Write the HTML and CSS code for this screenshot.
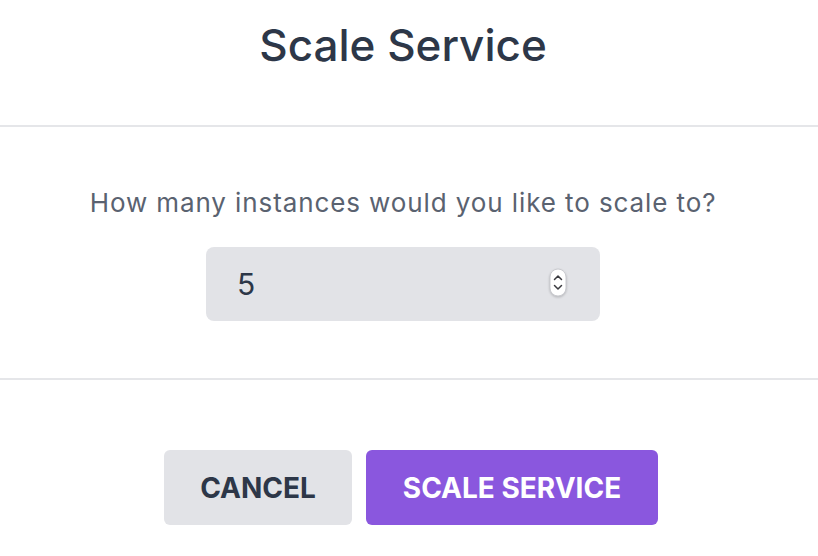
FILE: index.html
```html
<!DOCTYPE html>
<html lang="en">
<head>
<meta charset="utf-8">
<title>Scale Service</title>
<link rel="stylesheet" href="styles.css">
</head>
<body>
<div class="modal">
  <header class="modal-header">
    <h1 class="title">Scale Service</h1>
  </header>
  <section class="modal-body">
    <p class="question">How many instances would you like to scale to?</p>
    <div class="number-input">
      <span class="value">5</span>
      <span class="spinner">
        <svg width="18" height="30" viewBox="0 0 18 30">
          <rect x="1" y="1" width="16" height="27" rx="8" fill="#ffffff" stroke="#c9cacf" stroke-width="1"/>
          <path d="M5.5 11.5 L9 8 L12.5 11.5" fill="none" stroke="#3a3a3f" stroke-width="1.5" stroke-linecap="round" stroke-linejoin="round"/>
          <path d="M5.5 17.5 L9 21 L12.5 17.5" fill="none" stroke="#3a3a3f" stroke-width="1.5" stroke-linecap="round" stroke-linejoin="round"/>
        </svg>
      </span>
    </div>
  </section>
  <footer class="modal-footer">
    <button class="btn btn-cancel">CANCEL</button>
    <button class="btn btn-primary">SCALE SERVICE</button>
  </footer>
</div>
</body>
</html>
```

FILE: styles.css
```css
* { box-sizing: border-box; }
html, body {
  margin: 0;
  padding: 0;
  background: #ffffff;
  font-family: Inter, "Noto Sans", "Liberation Sans", sans-serif;
}
.modal {
  width: 818px;
  height: 556px;
  display: flex;
  flex-direction: column;
}
.modal-header {
  height: 127px;
  border-bottom: 2px solid #e5e6e9;
  padding: 18px 12px 0 0;
  text-align: center;
}
.title {
  margin: 0;
  font-size: 44px;
  line-height: 54px;
  font-weight: 500;
  color: #2d3748;
  letter-spacing: 0;
}
.modal-body {
  height: 253px;
  border-bottom: 2px solid #e5e6e9;
  padding: 58px 12px 0 0;
  display: flex;
  flex-direction: column;
  align-items: center;
}
.question {
  margin: 0;
  font-size: 26px;
  line-height: 36px;
  color: #5a6270;
  font-weight: 400;
  letter-spacing: 0.9px;
}
.number-input {
  margin-top: 26px;
  width: 394px;
  height: 74px;
  background: #e2e3e7;
  border-radius: 8px;
  display: flex;
  align-items: center;
  justify-content: space-between;
  padding: 0 33px 0 31px;
}
.value {
  font-size: 30px;
  color: #2d3748;
}
.spinner {
  display: flex;
  filter: drop-shadow(0 1px 1px rgba(0,0,0,0.2));
  margin-top: -2px;
}
.modal-footer {
  flex: 1;
  display: flex;
  justify-content: center;
  align-items: flex-start;
  gap: 14px;
  padding: 70px 0 0 4px;
}
.btn {
  font-family: Inter, "Noto Sans", "Liberation Sans", sans-serif;
  height: 75px;
  border: none;
  border-radius: 6px;
  font-size: 28px;
  font-weight: 700;
  padding: 0;
  cursor: pointer;
}
.btn-cancel {
  width: 188px;
  background: #e2e3e7;
  color: #2d3748;
}
.btn-primary {
  width: 292px;
  background: #8a57de;
  color: #ffffff;
}
```
